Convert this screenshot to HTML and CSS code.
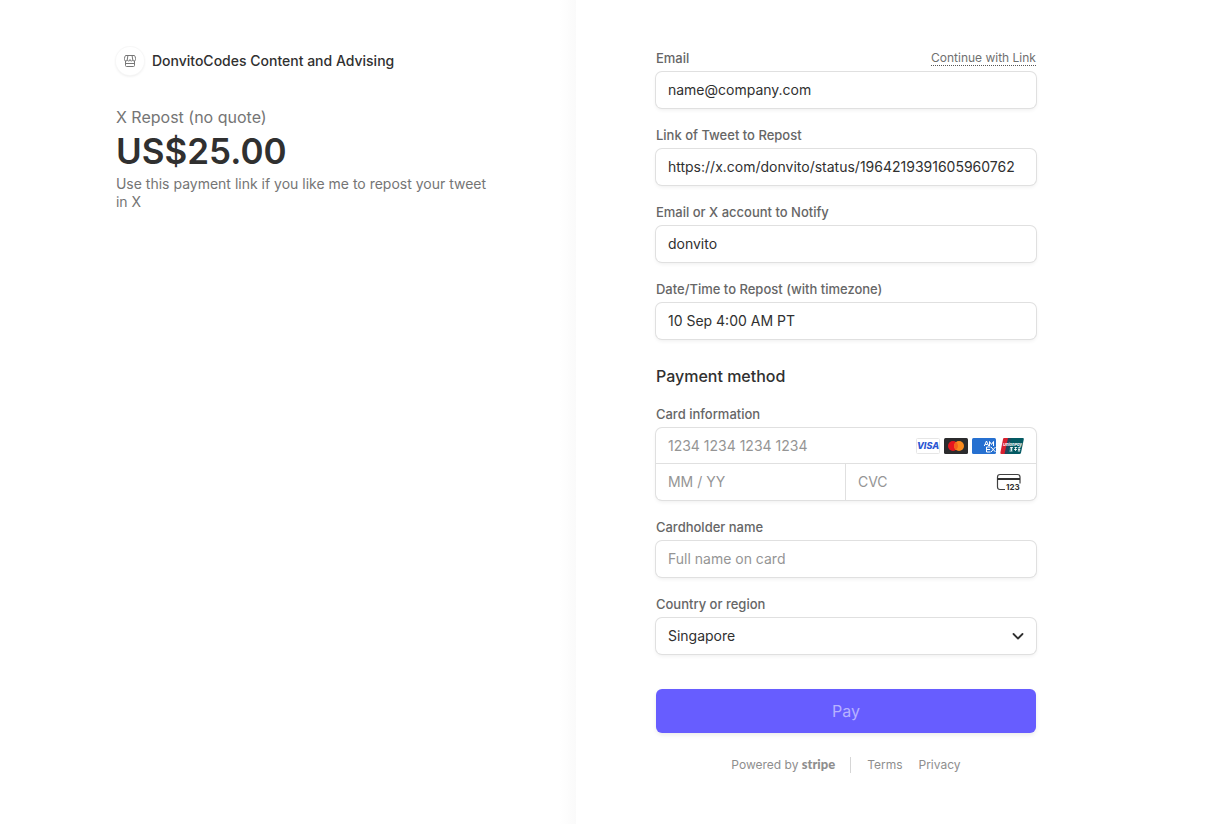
FILE: index.html
```html
<!DOCTYPE html>
<html lang="en">
<head>
<meta charset="utf-8">
<meta name="viewport" content="width=device-width, initial-scale=1">
<title>DonvitoCodes Content and Advising</title>
<link rel="stylesheet" href="styles.css">
</head>
<body>
<div class="checkout">
  <section class="overview">
    <div class="overview-body">
      <header class="merchant">
        <span class="merchant-badge">
          <svg width="12" height="12" viewBox="0 0 12 12" fill="none" stroke="#777" stroke-width="1" aria-hidden="true">
            <path d="M1.500 .5h9q1 1.500 1 3v1q0 1.500-1.400 1.500T8.700 4.500Q8.700 6 7.350 6T6 4.500Q6 6 4.650 6T3.300 4.500Q3.300 6 1.900 6T.5 4.500v-1q0-1.500 1-3zM3.900 .5l-.6 4M8.100 .5l.6 4M1.500 6v4.500q0 1 1 1h7q1 0 1-1V6M1.500 8.500h9"/>
          </svg>
        </span>
        <h1 class="merchant-name">DonvitoCodes Content and Advising</h1>
      </header>
      <h2 class="product">X Repost (no quote)</h2>
      <p class="amount">US$25.00</p>
      <p class="description">Use this payment link if you like me to repost your tweet in X</p>
    </div>
  </section>

  <main class="payment">
    <form class="form">
      <div class="field">
        <div class="label-row">
          <label class="label" for="email">Email</label>
          <a class="link-pay" href="#">Continue with Link</a>
        </div>
        <input class="input" id="email" type="email" value="name@company.com">
      </div>
      <div class="field">
        <label class="label" for="tweet">Link of Tweet to Repost</label>
        <input class="input" id="tweet" type="text" value="https://x.com/donvito/status/1964219391605960762">
      </div>
      <div class="field">
        <label class="label" for="notify">Email or X account to Notify</label>
        <input class="input" id="notify" type="text" value="donvito">
      </div>
      <div class="field">
        <label class="label" for="when">Date/Time to Repost (with timezone)</label>
        <input class="input" id="when" type="text" value="10 Sep 4:00 AM PT">
      </div>

      <h2 class="section-title">Payment method</h2>

      <div class="field">
        <label class="label" for="card">Card information</label>
        <div class="card-box">
          <div class="card-number">
            <input class="bare" id="card" type="text" placeholder="1234 1234 1234 1234">
            <span class="brands">
              <svg width="24" height="16" viewBox="0 0 24 16" role="img" aria-label="Visa">
                <rect x=".5" y=".5" width="23" height="15" rx="1" fill="#fff" stroke="#e6e6e6"/>
                <text class="visa" x="12" y="11" text-anchor="middle">VISA</text>
              </svg>
              <svg width="24" height="16" viewBox="0 0 24 16" role="img" aria-label="Mastercard">
                <rect width="24" height="16" rx="1.500" fill="#2b2b2d"/>
                <circle cx="9" cy="8" r="5" fill="#e6151f"/>
                <circle cx="15" cy="8" r="5" fill="#f98a1d"/>
                <path d="M12 4a5 5 0 0 1 0 8 5 5 0 0 1 0-8z" fill="#f4611c"/>
              </svg>
              <svg width="24" height="16" viewBox="0 0 24 16" role="img" aria-label="American Express">
                <rect width="24" height="16" rx="1.500" fill="#2670d0"/>
                <g fill="none" stroke="#fff" stroke-width="1">
                  <path d="M12.300 8l2.200-5 2.200 5M13.300 6.500h2.400M17.500 8V3.500l2 3 2-3V8M18.500 9h-4v5h4M14.500 11.500h3.500M19 9l4.500 5M23.500 9L19 14"/>
                </g>
              </svg>
              <svg width="24" height="16" viewBox="0 0 24 16" role="img" aria-label="UnionPay">
                <path d="M4 0h7L7.500 16h-6Q0 16 .4 14.500L3 1.200Q3.200 0 4 0z" fill="#d8202f"/>
                <path d="M8 0h8l-3.500 16h-8z" fill="#24465c"/>
                <path d="M11 0h11.800q1.300 0 1 1.300L21 14.700Q20.700 16 19.500 16H7.500z" fill="#045a63"/>
                <text class="union" x="12.500" y="8" text-anchor="middle">UnionPay</text>
                <path d="M10 9.500h3M9.800 11h2.700M11.500 9v4M9.500 13h3M14.500 9.500h2.700M14 11.500h3M15.500 9v4M18.500 9.500h2M18 11.500h2.300M17.800 13h2.300M19 9v4" stroke="#fff" stroke-width=".8" fill="none"/>
              </svg>
            </span>
          </div>
          <div class="card-details">
            <input class="bare expiry" type="text" placeholder="MM / YY" aria-label="Expiry">
            <div class="cvc">
              <input class="bare" type="text" placeholder="CVC" aria-label="CVC">
              <svg class="cvc-icon" width="26" height="20" viewBox="0 0 26 20" aria-hidden="true">
                <path d="M9 17.500H4Q1.500 17.500 1.500 15V5Q1.500 2.500 4 2.500h17.500Q24 2.500 24 5v6.500" fill="none" stroke="#404040" stroke-width="1.200"/>
                <path d="M1.500 6H24v2H1.500z" fill="#303030"/>
                <text class="cvc-digits" x="10" y="18">123</text>
              </svg>
            </div>
          </div>
        </div>
      </div>
      <div class="field">
        <label class="label" for="holder">Cardholder name</label>
        <input class="input" id="holder" type="text" placeholder="Full name on card">
      </div>
      <div class="field">
        <label class="label" for="country">Country or region</label>
        <div class="select-wrap">
          <select class="input select" id="country"><option>Singapore</option></select>
          <svg class="chevron" width="12" height="12" viewBox="0 0 12 12" fill="none" stroke="#303030" stroke-width="1.800" stroke-linecap="round" stroke-linejoin="round" aria-hidden="true"><path d="M1.500 4L6 8.500 10.500 4"/></svg>
        </div>
      </div>

      <button class="pay" type="submit">Pay</button>
    </form>
    <footer class="footer">
      <a class="powered" href="#">Powered by <b class="stripe">stripe</b></a>
      <nav class="legal">
        <a href="#">Terms</a>
        <a href="#">Privacy</a>
      </nav>
    </footer>
  </main>
</div>
</body>
</html>
```
FILE: styles.css
```css
* {
  box-sizing: border-box;
}

body {
  margin: 0;
  background: #fff;
  color: #303030;
  font-family: Inter, "Liberation Sans", sans-serif;
  font-size: 14px;
}

h1, h2, p {
  margin: 0;
}

a {
  color: inherit;
  text-decoration: none;
}

.checkout {
  display: grid;
  grid-template-columns: 46.75% 1fr;
  min-height: 100vh;
}

.overview {
  display: flex;
  justify-content: flex-end;
  padding: 47px 80px 40px 40px;
  background: linear-gradient(to left, #fafafa, #fff 16px);
}

.overview-body {
  flex: 0 1 380px;
}

.merchant {
  display: flex;
  align-items: center;
  gap: 8px;
  margin-bottom: 29px;
}

.merchant-badge {
  display: grid;
  place-items: center;
  width: 28px;
  height: 28px;
  border-radius: 50%;
  background: #fff;
  box-shadow: 0 0 0 1px #f7f7f7, 0 1px 3px #e4e4e4;
}

.merchant-name {
  font-size: 14px;
  font-weight: 500;
  line-height: 20px;
}

.product {
  color: #757575;
  font-size: 16px;
  font-weight: 400;
  line-height: 26px;
}

.amount {
  font-size: 35px;
  font-weight: 600;
  line-height: 42px;
}

.description {
  padding-top: 3px;
  color: #757575;
  font-weight: 400;
  line-height: 18px;
}

.payment {
  padding: 50px 80px 40px;
}

.form,
.footer {
  max-width: 380px;
}

.form {
  display: flex;
  flex-direction: column;
  gap: 19px;
}

.field {
  display: flex;
  flex-direction: column;
  gap: 6px;
}

.label-row {
  display: flex;
  justify-content: space-between;
}

.label {
  color: #666;
  font-size: 13px;
  font-weight: 500;
  line-height: 16px;
}

.link-pay {
  border-bottom: 1px dotted #555;
  color: #707070;
  font-size: 12px;
  line-height: 15px;
}

.input,
.bare {
  width: 100%;
  height: 36px;
  padding: 0 12px 2px;
  border: 0;
  background: #fff;
  color: #303030;
  font: inherit;
}

.input,
.card-box {
  border-radius: 6px;
  box-shadow: 0 0 0 1px #e0e0e0, 0 2px 4px rgba(0, 0, 0, 0.07);
}

.bare {
  min-width: 0;
  background: transparent;
}

.input::placeholder,
.bare::placeholder {
  color: #959595;
  opacity: 1;
}

.section-title {
  margin: 8px 0 1px;
  font-size: 16px;
  font-weight: 500;
  line-height: 20px;
}

.card-number,
.cvc,
.brands {
  display: flex;
  align-items: center;
}

.card-number {
  height: 36px;
  border-bottom: 1px solid #e0e0e0;
}

.card-number .bare {
  padding-bottom: 0;
}

.brands {
  gap: 4px;
  padding-right: 12px;
}

.card-details {
  display: grid;
  grid-template-columns: 1fr 1fr;
}

.expiry {
  border-right: 1px solid #e0e0e0;
}

.cvc {
  min-width: 0;
}

.cvc-icon {
  flex: none;
  margin-right: 14px;
}

.visa {
  fill: #2a56d2;
  font-size: 9px;
  font-style: italic;
  font-weight: 800;
}

.union {
  fill: #fff;
  font-size: 4px;
  font-style: italic;
  font-weight: 700;
}

.cvc-digits {
  fill: #303030;
  font-size: 8px;
  font-weight: 700;
}

.select-wrap {
  display: grid;
  align-items: center;
}

.select,
.chevron {
  grid-area: 1 / 1;
}

.select {
  appearance: none;
}

.chevron {
  justify-self: end;
  margin-right: 12px;
  pointer-events: none;
}

.pay {
  height: 44px;
  margin-top: 16px;
  border: 0;
  border-radius: 6px;
  background: #675dff;
  box-shadow: 0 2px 4px rgba(0, 0, 0, 0.08);
  color: #b7b2ff;
  font: inherit;
  font-size: 16px;
}

.footer {
  display: flex;
  align-items: center;
  justify-content: center;
  margin-top: 24px;
  color: #8e8e8e;
  font-size: 12px;
  line-height: 16px;
}

.powered {
  padding-right: 15px;
  border-right: 1px solid #d6d6d6;
}

.stripe {
  font-family: Lato, "Liberation Sans", sans-serif;
  font-size: 13px;
  font-weight: 900;
  line-height: 1;
}

.legal {
  display: flex;
  gap: 16px;
  padding-left: 16px;
}
```
